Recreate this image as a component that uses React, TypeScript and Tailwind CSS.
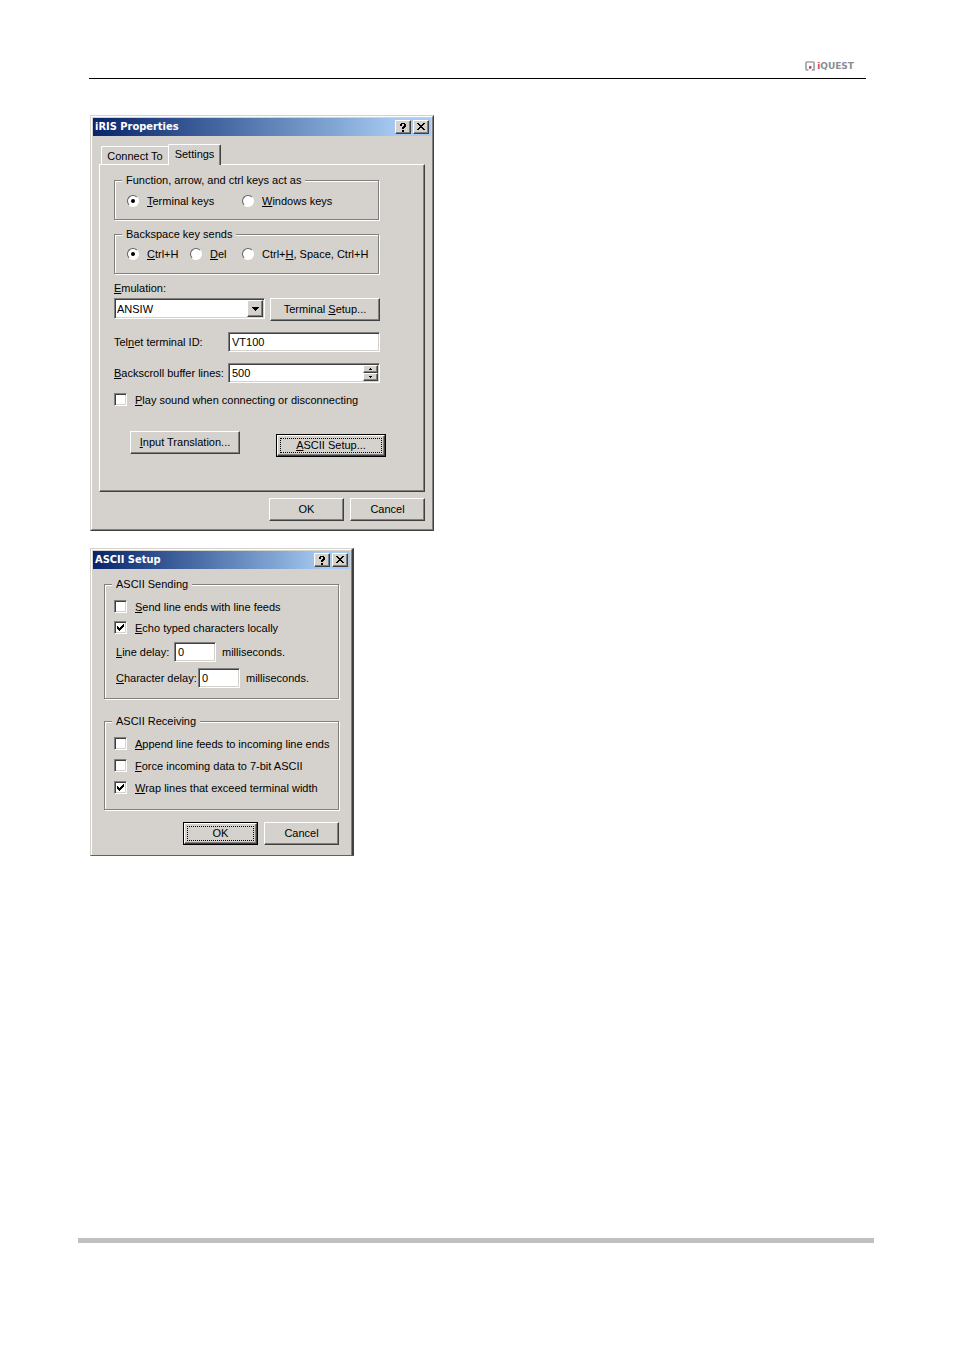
import type { ReactNode } from 'react';

const raised =
  'border border-t-white border-l-white border-r-[#404040] border-b-[#404040] shadow-[inset_-1px_-1px_0_#808080]';
const sunken =
  'border border-t-[#808080] border-l-[#808080] border-r-white border-b-white shadow-[inset_1px_1px_0_#404040,inset_-1px_-1px_0_#d5d2cd]';

function PushButton({ children, focused = false, wide = false }: { children: ReactNode; focused?: boolean; wide?: boolean }) {
  const size = wide ? 'w-[110px]' : 'w-[75px]';
  if (focused) {
    return (
      <button type="button" className={`${size} h-[23px] shrink-0 border border-black bg-[#d5d2cd]`}>
        <span className={`flex h-full p-0.5 ${raised}`}>
          <span className="flex flex-1 items-center justify-center border border-dotted border-black pb-0.5 leading-3">
            <span>{children}</span>
          </span>
        </span>
      </button>
    );
  }
  return (
    <button type="button" className={`${size} h-[23px] shrink-0 bg-[#d5d2cd] pb-0.5 ${raised}`}>
      {children}
    </button>
  );
}

function Radio({ name, children, checked = false }: { name: string; children: ReactNode; checked?: boolean }) {
  return (
    <label className="flex items-center gap-2 whitespace-nowrap">
      <input
        type="radio"
        name={name}
        defaultChecked={checked}
        className="grid size-3 shrink-0 appearance-none place-content-center rounded-full border border-t-[#606060] border-l-[#606060] border-r-white border-b-white bg-white before:size-1 before:rounded-full checked:before:bg-black"
      />
      <span>{children}</span>
    </label>
  );
}

function Check({ children, checked = false }: { children: ReactNode; checked?: boolean }) {
  return (
    <label className="flex h-[13px] items-center gap-2 whitespace-nowrap">
      <span className="relative size-[13px] shrink-0">
        <input type="checkbox" defaultChecked={checked} className={`peer block size-[13px] appearance-none bg-white ${sunken}`} />
        <svg
          viewBox="0 0 13 13"
          shapeRendering="crispEdges"
          className="pointer-events-none absolute inset-0 hidden size-[13px] peer-checked:block"
        >
          <path d="M3 5h1v1h1v1h1v-1h1v-1h1v-1h1v-1h1v3h-1v1h-1v1h-1v1h-1v1h-1v-1h-1v-1h-1z" fill="#000" />
        </svg>
      </span>
      <span>{children}</span>
    </label>
  );
}

function Group({ title, className, children }: { title: string; className: string; children: ReactNode }) {
  return (
    <fieldset className="min-w-0 border border-[#808080] pl-[7px] shadow-[1px_1px_0_#fff,inset_1px_1px_0_#fff]">
      <legend className="bg-[#d5d2cd] px-1 leading-[13px]">{title}</legend>
      <div className={className}>{children}</div>
    </fieldset>
  );
}

function TitleBar({ title }: { title: string }) {
  return (
    <header className="flex h-[18px] items-center gap-0.5 bg-linear-to-r from-[#0a246a] to-[#a6caf0] to-90% px-0.5">
      <h2 className="flex-1 font-['DejaVu_Sans_Condensed','DejaVu_Sans',sans-serif] text-[11px] font-bold text-white">{title}</h2>
      <button type="button" aria-label="Help" className={`flex h-3.5 w-4 items-center justify-center bg-[#d5d2cd] ${raised}`}>
        <svg viewBox="0 0 7 9" shapeRendering="crispEdges" className="h-[9px] w-[7px]">
          <path d="M1 0h4v1h1v3h-1v1h-1v1h-2v-2h1v-1h1v-2h-2v2h-2v-2h1zM2 7h2v2h-2z" fill="#000" />
        </svg>
      </button>
      <button type="button" aria-label="Close" className={`flex h-3.5 w-4 items-center justify-center bg-[#d5d2cd] pb-px ${raised}`}>
        <svg viewBox="0 0 8 7" shapeRendering="crispEdges" className="h-[7px] w-2">
          <path
            d="M0 0h2v1h1v1h2v-1h1v-1h2v1h-1v1h-1v1h-1v1h1v1h1v1h1v1h-2v-1h-1v-1h-2v1h-1v1h-2v-1h1v-1h1v-1h1v-1h-1v-1h-1v-1h-1z"
            fill="#000"
          />
        </svg>
      </button>
    </header>
  );
}

function PropertiesDialog() {
  return (
    <section className="w-[344px] border border-t-[#d5d2cd] border-l-[#d5d2cd] border-r-[#404040] border-b-[#404040] bg-[#d5d2cd]">
      <div className="border border-t-white border-l-white border-r-[#808080] border-b-[#808080] p-px">
        <TitleBar title="iRIS Properties" />
        <div className="px-1.5 pt-2 pb-[7px]">
          <div role="tablist" className="relative -mb-px flex h-[21px] items-end pl-0.5">
            <button
              type="button"
              role="tab"
              aria-selected="false"
              className="mb-px h-[18px] w-[67px] rounded-tl-[2px] border-t border-l border-white text-center"
            >
              Connect To
            </button>
            <button
              type="button"
              role="tab"
              aria-selected="true"
              className="h-[21px] w-[53px] rounded-t-[2px] border-t border-r border-l border-white border-r-[#404040] bg-[#d5d2cd] pb-0.5 shadow-[inset_-1px_0_0_#808080]"
            >
              Settings
            </button>
          </div>
          <div role="tabpanel" className={`pt-[9px] pr-11 pb-[34px] pl-3.5 ${raised}`}>
            <div className="mr-px flex flex-col gap-2">
              <Group title="Function, arrow, and ctrl keys act as" className="grid h-8 grid-cols-[115px_1fr] items-center pb-1 pl-[5px]">
                <Radio name="keys" checked>
                  <u>T</u>erminal keys
                </Radio>
                <Radio name="keys">
                  <u>W</u>indows keys
                </Radio>
              </Group>
              <Group title="Backspace key sends" className="grid h-8 grid-cols-[63px_52px_1fr] items-center pb-1.5 pl-[5px]">
                <Radio name="backspace" checked>
                  <u>C</u>trl+H
                </Radio>
                <Radio name="backspace">
                  <u>D</u>el
                </Radio>
                <Radio name="backspace">
                  Ctrl+<u>H</u>, Space, Ctrl+H
                </Radio>
              </Group>
            </div>
            <label htmlFor="emulation" className="mt-[7px] block leading-[14px]">
              <u>E</u>mulation:
            </label>
            <div className="mt-[3px] flex items-start justify-between">
              <div className="relative h-[21px] w-[151px]">
                <select id="emulation" className={`block h-full w-full appearance-none bg-white pr-5 pl-0.5 ${sunken}`}>
                  <option>ANSIW</option>
                </select>
                <span className={`pointer-events-none absolute top-0.5 right-0.5 flex h-[17px] w-4 items-center justify-center bg-[#d5d2cd] ${raised}`}>
                  <svg viewBox="0 0 7 4" shapeRendering="crispEdges" className="h-1 w-[7px]">
                    <path d="M0 0h7v1h-1v1h-1v1h-1v1h-1v-1h-1v-1h-1v-1h-1z" fill="#000" />
                  </svg>
                </span>
              </div>
              <PushButton wide>
                Terminal <u>S</u>etup...
              </PushButton>
            </div>
            <div className="mt-[11px] flex items-center">
              <label htmlFor="terminal-id" className="w-[114px] shrink-0 whitespace-nowrap">
                Tel<u>n</u>et terminal ID:
              </label>
              <input id="terminal-id" defaultValue="VT100" className={`h-5 min-w-0 flex-1 bg-white px-[3px] ${sunken}`} />
            </div>
            <div className="mt-[11px] flex items-center">
              <label htmlFor="buffer-lines" className="w-[114px] shrink-0 whitespace-nowrap">
                <u>B</u>ackscroll buffer lines:
              </label>
              <div className={`flex h-5 min-w-0 flex-1 bg-white py-px pr-px ${sunken}`}>
                <input id="buffer-lines" defaultValue="500" className="min-w-0 flex-1 bg-transparent px-[3px] outline-none" />
                <div className="flex w-[15px] shrink-0 flex-col">
                  <button type="button" aria-label="More lines" className={`flex h-2 items-center justify-center bg-[#d5d2cd] ${raised}`}>
                    <svg viewBox="0 0 3 2" shapeRendering="crispEdges" className="h-0.5 w-[3px]">
                      <path d="M1 0h1v1h1v1h-3v-1h1z" fill="#000" />
                    </svg>
                  </button>
                  <button type="button" aria-label="Fewer lines" className={`flex h-2 items-center justify-center bg-[#d5d2cd] ${raised}`}>
                    <svg viewBox="0 0 3 2" shapeRendering="crispEdges" className="h-0.5 w-[3px]">
                      <path d="M0 0h3v1h-1v1h-1v-1h-1z" fill="#000" />
                    </svg>
                  </button>
                </div>
              </div>
            </div>
            <div className="mt-2.5">
              <Check>
                <u>P</u>lay sound when connecting or disconnecting
              </Check>
            </div>
            <div className="-mr-1.5 mt-[25px] flex h-[26px] items-start justify-between pl-4">
              <PushButton wide>
                <u>I</u>nput Translation...
              </PushButton>
              <div className="flex self-end">
                <PushButton wide focused>
                  <u>A</u>SCII Setup...
                </PushButton>
              </div>
            </div>
          </div>
          <footer className="mt-1.5 flex justify-end gap-1.5">
            <PushButton>OK</PushButton>
            <PushButton>Cancel</PushButton>
          </footer>
        </div>
      </div>
    </section>
  );
}

function AsciiDialog() {
  return (
    <section className="w-[264px] border border-r-2 border-t-[#d5d2cd] border-l-[#d5d2cd] border-r-[#404040] border-b-[#606060] bg-[#d5d2cd]">
      <div className="border border-b-0 border-t-white border-l-white border-r-[#808080] p-px">
        <TitleBar title="ASCII Setup" />
        <div className="px-[11px] pt-[9px] pb-[9px]">
          <div className="flex flex-col gap-4">
            <Group title="ASCII Sending" className="flex flex-col gap-2 pt-[9px] pb-2.5 pl-0.5">
              <Check>
                <u>S</u>end line ends with line feeds
              </Check>
              <Check checked>
                <u>E</u>cho typed characters locally
              </Check>
              <div className="flex flex-col gap-1.5 pl-0.5">
                <div className="flex items-center">
                  <label htmlFor="line-delay" className="w-[58px] whitespace-nowrap">
                    <u>L</u>ine delay:
                  </label>
                  <input id="line-delay" defaultValue="0" className={`mr-[6px] h-5 w-[42px] bg-white px-[3px] ${sunken}`} />
                  <span>milliseconds.</span>
                </div>
                <div className="flex items-center">
                  <label htmlFor="character-delay" className="w-[82px] whitespace-nowrap">
                    <u>C</u>haracter delay:
                  </label>
                  <input id="character-delay" defaultValue="0" className={`mr-[6px] h-5 w-[42px] bg-white px-[3px] ${sunken}`} />
                  <span>milliseconds.</span>
                </div>
              </div>
            </Group>
            <Group title="ASCII Receiving" className="flex flex-col gap-[9px] pt-[9px] pb-[15px] pl-0.5">
              <Check>
                <u>A</u>ppend line feeds to incoming line ends
              </Check>
              <Check>
                <u>F</u>orce incoming data to 7-bit ASCII
              </Check>
              <Check checked>
                <u>W</u>rap lines that exceed terminal width
              </Check>
            </Group>
          </div>
          <footer className="mt-3 flex justify-end gap-1.5">
            <PushButton focused>OK</PushButton>
            <PushButton>Cancel</PushButton>
          </footer>
        </div>
      </div>
    </section>
  );
}

export default function App() {
  return (
    <div className="flex min-h-screen flex-col bg-white pr-20 pb-[108px] pl-[78px] font-['Liberation_Sans',Arial,sans-serif] text-[11px] leading-[14px] text-black">
      <header className="mr-2 ml-[11px] flex h-[79px] items-end justify-end border-b border-black pr-3 pb-[7px]">
        <div className="flex items-center gap-0.5 text-[#8a8e96]">
          <svg viewBox="0 0 10 10" className="size-2.5" aria-hidden="true">
            <path d="M3.5 8.8H1.8Q1 8.8 1 8V1.8Q1 1 1.8 1H8.2Q9 1 9 1.8V8.8H6.8" fill="none" stroke="#9aa5a8" strokeWidth="1.7" />
            <rect x="4" y="5.2" width="2.4" height="2.4" fill="#c8285a" />
          </svg>
          <span className="font-['DejaVu_Sans',sans-serif] text-[9px] leading-[10px] font-bold">
            <span className="text-[#c8486e]">i</span>QUEST
          </span>
        </div>
      </header>
      <main className="flex flex-col items-start gap-[17px] pt-9 pb-10 pl-3">
        <PropertiesDialog />
        <AsciiDialog />
      </main>
      <footer className="mt-auto h-[5px] bg-[#c0c0c0]" />
    </div>
  );
}
